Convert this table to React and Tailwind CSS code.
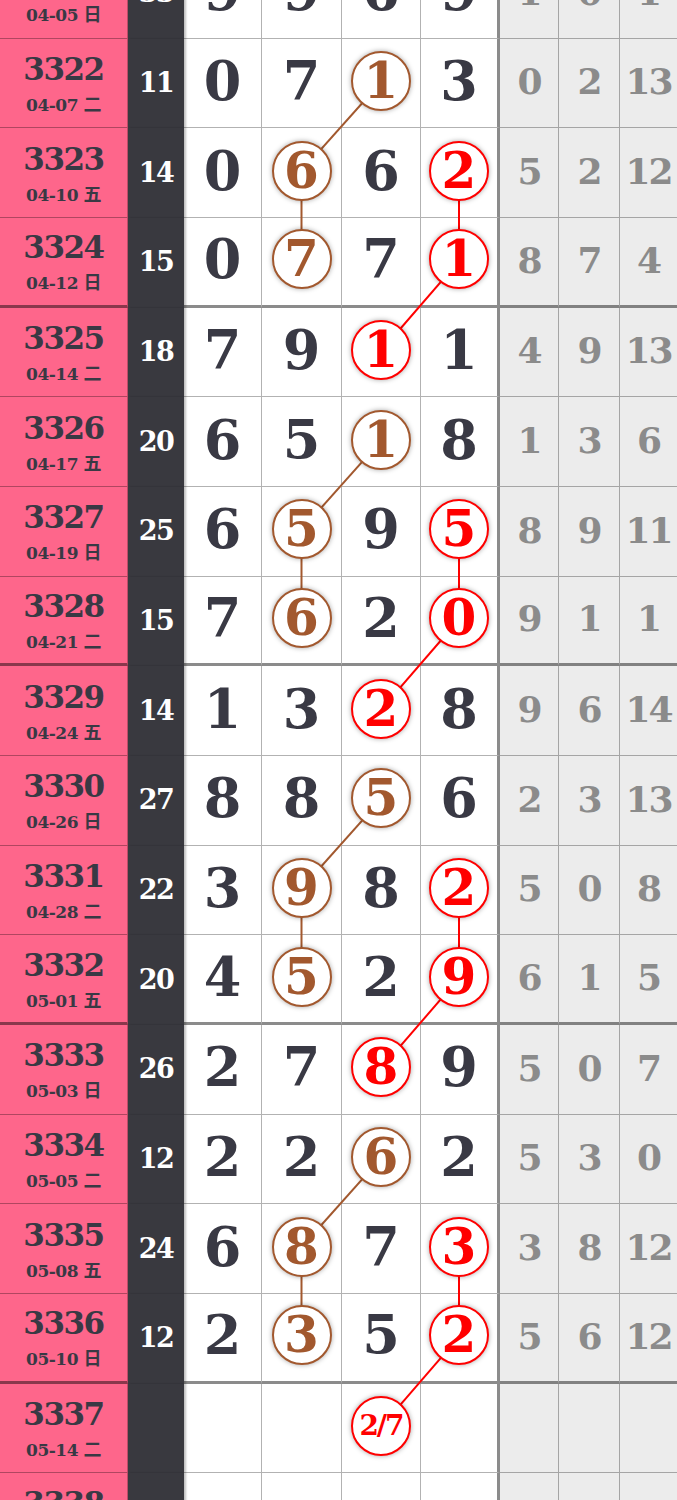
import React from 'react';

const rows = [
  { id: 3321, date: '04-05', wd: '日', sum: 33, d: [9, 9, 6, 9], g: [1, 0, 1], c: {} },
  { id: 3322, date: '04-07', wd: '二', sum: 11, d: [0, 7, 1, 3], g: [0, 2, 13], c: { 2: 'b' } },
  { id: 3323, date: '04-10', wd: '五', sum: 14, d: [0, 6, 6, 2], g: [5, 2, 12], c: { 1: 'b', 3: 'r' } },
  { id: 3324, date: '04-12', wd: '日', sum: 15, d: [0, 7, 7, 1], g: [8, 7, 4], c: { 1: 'b', 3: 'r' } },
  { id: 3325, date: '04-14', wd: '二', sum: 18, d: [7, 9, 1, 1], g: [4, 9, 13], c: { 2: 'r' } },
  { id: 3326, date: '04-17', wd: '五', sum: 20, d: [6, 5, 1, 8], g: [1, 3, 6], c: { 2: 'b' } },
  { id: 3327, date: '04-19', wd: '日', sum: 25, d: [6, 5, 9, 5], g: [8, 9, 11], c: { 1: 'b', 3: 'r' } },
  { id: 3328, date: '04-21', wd: '二', sum: 15, d: [7, 6, 2, 0], g: [9, 1, 1], c: { 1: 'b', 3: 'r' } },
  { id: 3329, date: '04-24', wd: '五', sum: 14, d: [1, 3, 2, 8], g: [9, 6, 14], c: { 2: 'r' } },
  { id: 3330, date: '04-26', wd: '日', sum: 27, d: [8, 8, 5, 6], g: [2, 3, 13], c: { 2: 'b' } },
  { id: 3331, date: '04-28', wd: '二', sum: 22, d: [3, 9, 8, 2], g: [5, 0, 8], c: { 1: 'b', 3: 'r' } },
  { id: 3332, date: '05-01', wd: '五', sum: 20, d: [4, 5, 2, 9], g: [6, 1, 5], c: { 1: 'b', 3: 'r' } },
  { id: 3333, date: '05-03', wd: '日', sum: 26, d: [2, 7, 8, 9], g: [5, 0, 7], c: { 2: 'r' } },
  { id: 3334, date: '05-05', wd: '二', sum: 12, d: [2, 2, 6, 2], g: [5, 3, 0], c: { 2: 'b' } },
  { id: 3335, date: '05-08', wd: '五', sum: 24, d: [6, 8, 7, 3], g: [3, 8, 12], c: { 1: 'b', 3: 'r' } },
  { id: 3336, date: '05-10', wd: '日', sum: 12, d: [2, 3, 5, 2], g: [5, 6, 12], c: { 1: 'b', 3: 'r' } },
  { id: 3337, date: '05-14', wd: '二', sum: '', d: ['', '', '2/7', ''], g: ['', '', ''], c: { 2: 'r' } },
  { id: 3338, date: '05-17', wd: '五', sum: '', d: ['', '', '', ''], g: ['', '', ''], c: {} },
];

const ROW_H = 89.67;
const colX = [223, 301.5, 381.5, 459];
const tones = { b: '#a2582e', r: '#ff0000' };

const Circle = ({ tone, children }) => {
  const small = String(children).length > 1;
  return (
    <div
      className={`relative z-10 flex items-center justify-center w-[60px] h-[60px] rounded-full bg-white border-[2.5px] shadow-[0_0_5px_rgba(0,0,0,0.35)] font-bold leading-none ${
        tone === 'b' ? 'border-[#a2582e] text-[#a2582e]' : 'border-[#ff0000] text-[#ff0000]'
      } ${small ? 'text-[28px] tracking-[-2px]' : 'text-[50px]'}`}
    >
      {children}
    </div>
  );
};

export default function App() {
  const links = [];
  rows.forEach((row, i) => {
    const next = rows[i + 1];
    if (!next) return;
    Object.entries(row.c).forEach(([col, tone]) => {
      const hit = Object.entries(next.c).find(([, t]) => t === tone);
      if (hit) links.push({ x1: colX[col], y1: i, x2: colX[hit[0]], y2: i + 1, tone });
    });
  });

  return (
    <div className="w-[677px] overflow-hidden bg-white font-['DejaVu_Serif','Noto_Sans_CJK_SC',serif] text-[#393944]">
      <div className="relative -mt-[51px]">
        <div className="grid grid-cols-[128px_56px_78px_80px_79px_79px_59px_61px_57px] auto-rows-[89.67px]">
          {rows.map((row) => {
            const edge = row.id % 4 === 0 ? 'border-b-[3px] border-b-black/45' : 'border-b border-b-black/30';
            return (
              <React.Fragment key={row.id}>
                <div className={`flex flex-col items-center justify-center pt-[2px] bg-[#fe668b] border-r border-r-black/25 ${edge}`}>
                  <span className="text-[31px] font-bold leading-none tracking-[-1.5px]">{row.id}</span>
                  <span className="mt-[9px] text-[17px] font-bold leading-none tracking-[-0.5px]">
                    {row.date} <span className="font-['Noto_Sans_CJK_SC',sans-serif] text-[18px]">{row.wd}</span>
                  </span>
                </div>
                <div className="relative z-[1] flex items-center justify-center pb-[2px] bg-[#39393f] shadow-[2px_0_2px_rgba(0,0,0,0.25)] text-white text-[27px] font-bold leading-none tracking-[-1.5px]">
                  {row.sum}
                </div>
                {row.d.map((v, j) => (
                  <div
                    key={j}
                    className={`flex items-center justify-center pb-[4px] text-[54px] font-bold leading-none ${edge} ${
                      j === 3 ? 'border-r-[3px] border-r-black/45' : 'border-r border-r-black/30'
                    }`}
                  >
                    {row.c[j] ? <Circle tone={row.c[j]}>{v}</Circle> : v}
                  </div>
                ))}
                {row.g.map((v, j) => (
                  <div
                    key={j}
                    className={`flex items-center justify-center pb-[3px] bg-[#ececec] text-[#8b8b8b] text-[36px] font-bold leading-none tracking-[-2px] ${edge} ${
                      j < 2 ? 'border-r border-r-black/30' : ''
                    }`}
                  >
                    {v}
                  </div>
                ))}
              </React.Fragment>
            );
          })}
        </div>
        <svg className="absolute left-0 top-0 pointer-events-none" width="677" height={rows.length * ROW_H}>
          {links.map((l, k) => (
            <line
              key={k}
              x1={l.x1}
              y1={l.y1 * ROW_H + ROW_H / 2 - 2}
              x2={l.x2}
              y2={l.y2 * ROW_H + ROW_H / 2 - 2}
              stroke={tones[l.tone]}
              strokeWidth="2"
            />
          ))}
        </svg>
      </div>
    </div>
  );
}
